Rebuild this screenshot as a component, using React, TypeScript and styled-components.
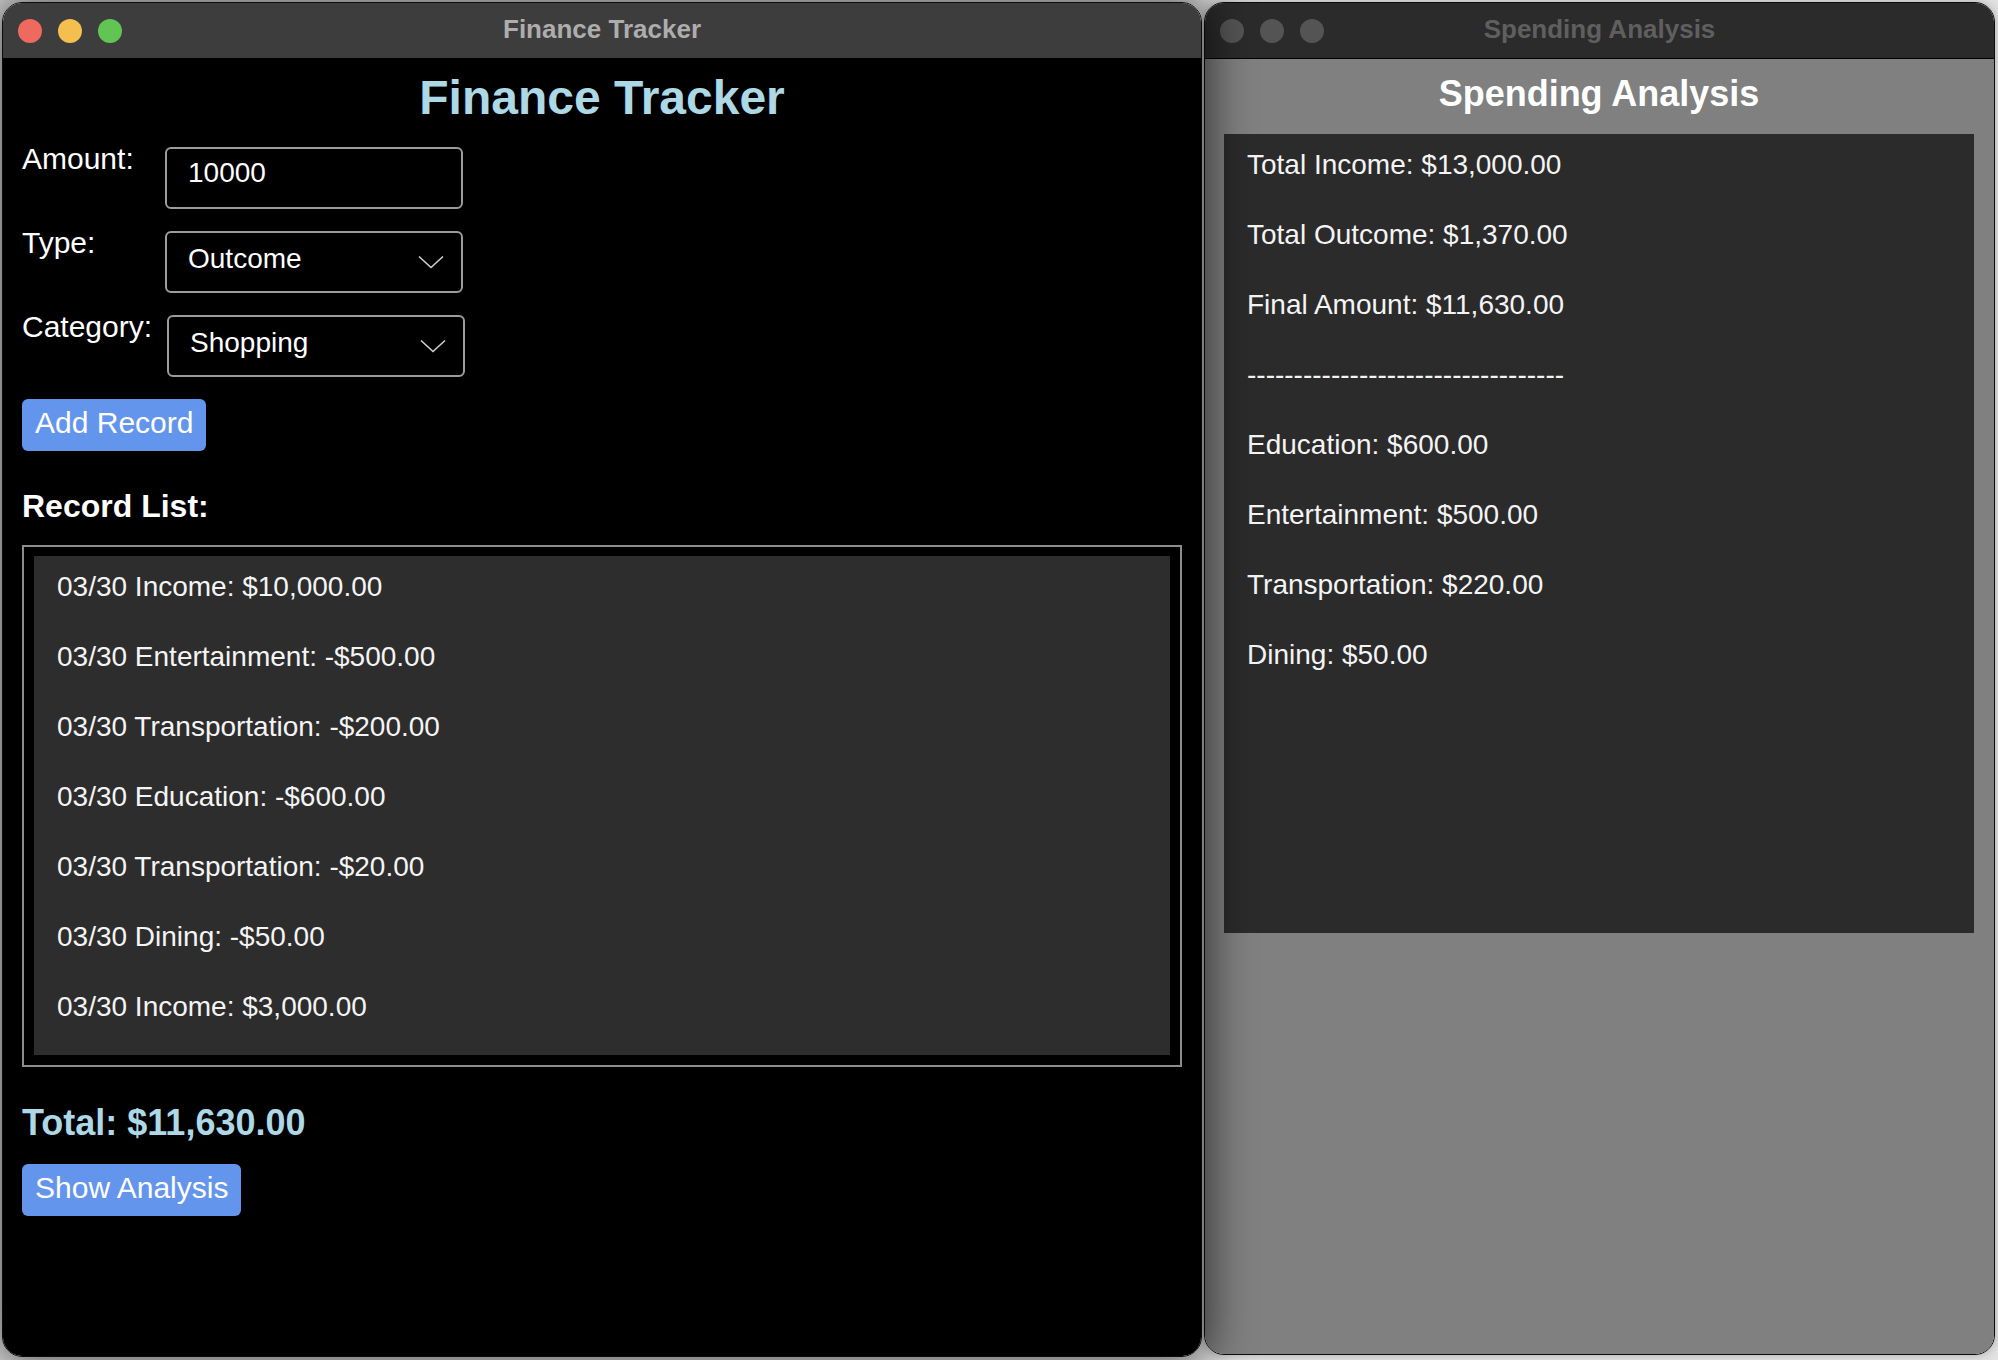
import React from "react";
import styled, { createGlobalStyle } from "styled-components";

const GlobalStyle = createGlobalStyle`
  html, body {
    margin: 0;
    padding: 0;
    background: #e2e2e2;
  }
  body {
    font-family: "Liberation Sans", Arial, Helvetica, sans-serif;
  }
`;

const Desktop = styled.div`
  display: flex;
  align-items: flex-start;
  gap: 2px;
  padding: 2px 0 0 2px;
  height: 1360px;
  box-sizing: border-box;
  overflow: hidden;
`;

const Window = styled.div<{ $w: number; $h: number; $front?: boolean }>`
  width: ${(p) => p.$w}px;
  height: ${(p) => p.$h}px;
  box-sizing: border-box;
  border: 1px solid #0c0c0c;
  border-radius: 20px;
  overflow: hidden;
  display: flex;
  flex-direction: column;
  position: relative;
  z-index: ${(p) => (p.$front ? 2 : 1)};
  box-shadow: ${(p) =>
    p.$front ? "0 0 44px 8px rgba(0,0,0,0.6)" : "0 0 10px rgba(0,0,0,0.25)"};
`;

const TitleBar = styled.div<{ $active?: boolean }>`
  height: 56px;
  flex-shrink: 0;
  box-sizing: border-box;
  display: grid;
  grid-template-columns: 1fr auto 1fr;
  align-items: center;
  padding: 0 15px;
  background: ${(p) => (p.$active ? "#3d3d3d" : "#2b2b2b")};
  border-bottom: 1px solid #000;
`;

const Lights = styled.div`
  display: flex;
  gap: 16px;
`;

const Light = styled.span<{ $c: string }>`
  width: 24px;
  height: 24px;
  border-radius: 50%;
  background: ${(p) => p.$c};
`;

const TitleText = styled.div<{ $active?: boolean }>`
  font-size: 26px;
  font-weight: 700;
  color: ${(p) => (p.$active ? "#adadad" : "#5f5f5f")};
  margin-top: -2px;
`;

const Content = styled.div<{ $bg: string; $pr: number }>`
  flex: 1;
  display: flex;
  flex-direction: column;
  background: ${(p) => p.$bg};
  padding: 0 ${(p) => p.$pr}px 0 19px;
`;

const MainHeading = styled.h1`
  margin: 11px 0 0;
  font-size: 48px;
  line-height: 56px;
  font-weight: 700;
  text-align: center;
  color: #add8e6;
`;

const Form = styled.div`
  margin-top: 21px;
  display: grid;
  grid-template-columns: 143px 300px;
  row-gap: 22px;
`;

const Label = styled.div`
  align-self: start;
  margin-top: -5px;
  font-size: 30px;
  line-height: 34px;
  color: #ffffff;
`;

const Field = styled.div<{ $shift?: number }>`
  width: 298px;
  height: 62px;
  box-sizing: border-box;
  border: 2px solid #9c9c9c;
  border-radius: 6px;
  background: #000;
  display: flex;
  align-items: center;
  justify-content: space-between;
  padding: 0 17px 0 21px;
  margin-left: ${(p) => p.$shift ?? 0}px;
`;

const FieldText = styled.span<{ $lift: number }>`
  font-size: 28px;
  line-height: 32px;
  color: #ffffff;
  margin-bottom: ${(p) => p.$lift}px;
`;

const Button = styled.button<{ $mt: number }>`
  align-self: flex-start;
  margin-top: ${(p) => p.$mt}px;
  height: 52px;
  display: inline-flex;
  align-items: center;
  padding: 0 13px 5px;
  border: none;
  border-radius: 6px;
  background: #6495ed;
  color: #ffffff;
  font-family: "Liberation Sans", Arial, sans-serif;
  font-size: 30px;
  line-height: 34px;
`;

const SectionTitle = styled.h2`
  margin: 36px 0 0;
  font-size: 32px;
  line-height: 38px;
  font-weight: 700;
  color: #ffffff;
`;

const ListFrame = styled.div`
  margin-top: 20px;
  border: 2px solid #8c8c8c;
  padding: 9px 10px 10px;
`;

const ListPanel = styled.div`
  background: #2d2d2d;
  padding-bottom: 9px;
`;

const Item = styled.div`
  font-size: 28px;
  line-height: 34px;
  padding: 14px 23px 22px;
  color: #f4f4f4;
  white-space: nowrap;
`;

const Total = styled.div`
  margin-top: 35px;
  font-size: 36px;
  line-height: 42px;
  font-weight: 700;
  color: #add8e6;
`;

const SideHeading = styled.h1`
  margin: 14px 0 0;
  font-size: 36px;
  line-height: 42px;
  font-weight: 700;
  text-align: center;
  color: #ffffff;
`;

const AnalysisPanel = styled.div`
  margin-top: 19px;
  height: 799px;
  background: #2b2b2b;
`;

const Chevron = () => (
  <svg width="26" height="14" viewBox="0 0 26 14" aria-hidden="true">
    <polyline
      points="1,1.5 13,12.5 25,1.5"
      fill="none"
      stroke="#d0d0d0"
      strokeWidth="1.6"
    />
  </svg>
);

const records = [
  "03/30 Income: $10,000.00",
  "03/30 Entertainment: -$500.00",
  "03/30 Transportation: -$200.00",
  "03/30 Education: -$600.00",
  "03/30 Transportation: -$20.00",
  "03/30 Dining: -$50.00",
  "03/30 Income: $3,000.00",
];

const analysis = [
  "Total Income: $13,000.00",
  "Total Outcome: $1,370.00",
  "Final Amount: $11,630.00",
  "----------------------------------",
  "Education: $600.00",
  "Entertainment: $500.00",
  "Transportation: $220.00",
  "Dining: $50.00",
];

export default function App() {
  return (
    <>
      <GlobalStyle />
      <Desktop>
        <Window $w={1200} $h={1355} $front>
          <TitleBar $active>
            <Lights>
              <Light $c="#ee6a5f" />
              <Light $c="#f5bf4f" />
              <Light $c="#61c554" />
            </Lights>
            <TitleText $active>Finance Tracker</TitleText>
            <span />
          </TitleBar>
          <Content $bg="#000000" $pr={19}>
            <MainHeading>Finance Tracker</MainHeading>
            <Form>
              <Label>Amount:</Label>
              <Field>
                <FieldText $lift={11}>10000</FieldText>
              </Field>
              <Label>Type:</Label>
              <Field>
                <FieldText $lift={7}>Outcome</FieldText>
                <Chevron />
              </Field>
              <Label>Category:</Label>
              <Field $shift={2}>
                <FieldText $lift={7}>Shopping</FieldText>
                <Chevron />
              </Field>
            </Form>
            <Button $mt={22}>Add Record</Button>
            <SectionTitle>Record List:</SectionTitle>
            <ListFrame>
              <ListPanel>
                {records.map((r, i) => (
                  <Item key={i}>{r}</Item>
                ))}
              </ListPanel>
            </ListFrame>
            <Total>Total: $11,630.00</Total>
            <Button $mt={20}>Show Analysis</Button>
          </Content>
        </Window>
        <Window $w={791} $h={1353}>
          <TitleBar>
            <Lights>
              <Light $c="#545454" />
              <Light $c="#545454" />
              <Light $c="#545454" />
            </Lights>
            <TitleText>Spending Analysis</TitleText>
            <span />
          </TitleBar>
          <Content $bg="#808080" $pr={20}>
            <SideHeading>Spending Analysis</SideHeading>
            <AnalysisPanel>
              {analysis.map((a, i) => (
                <Item key={i}>{a}</Item>
              ))}
            </AnalysisPanel>
          </Content>
        </Window>
      </Desktop>
    </>
  );
}
